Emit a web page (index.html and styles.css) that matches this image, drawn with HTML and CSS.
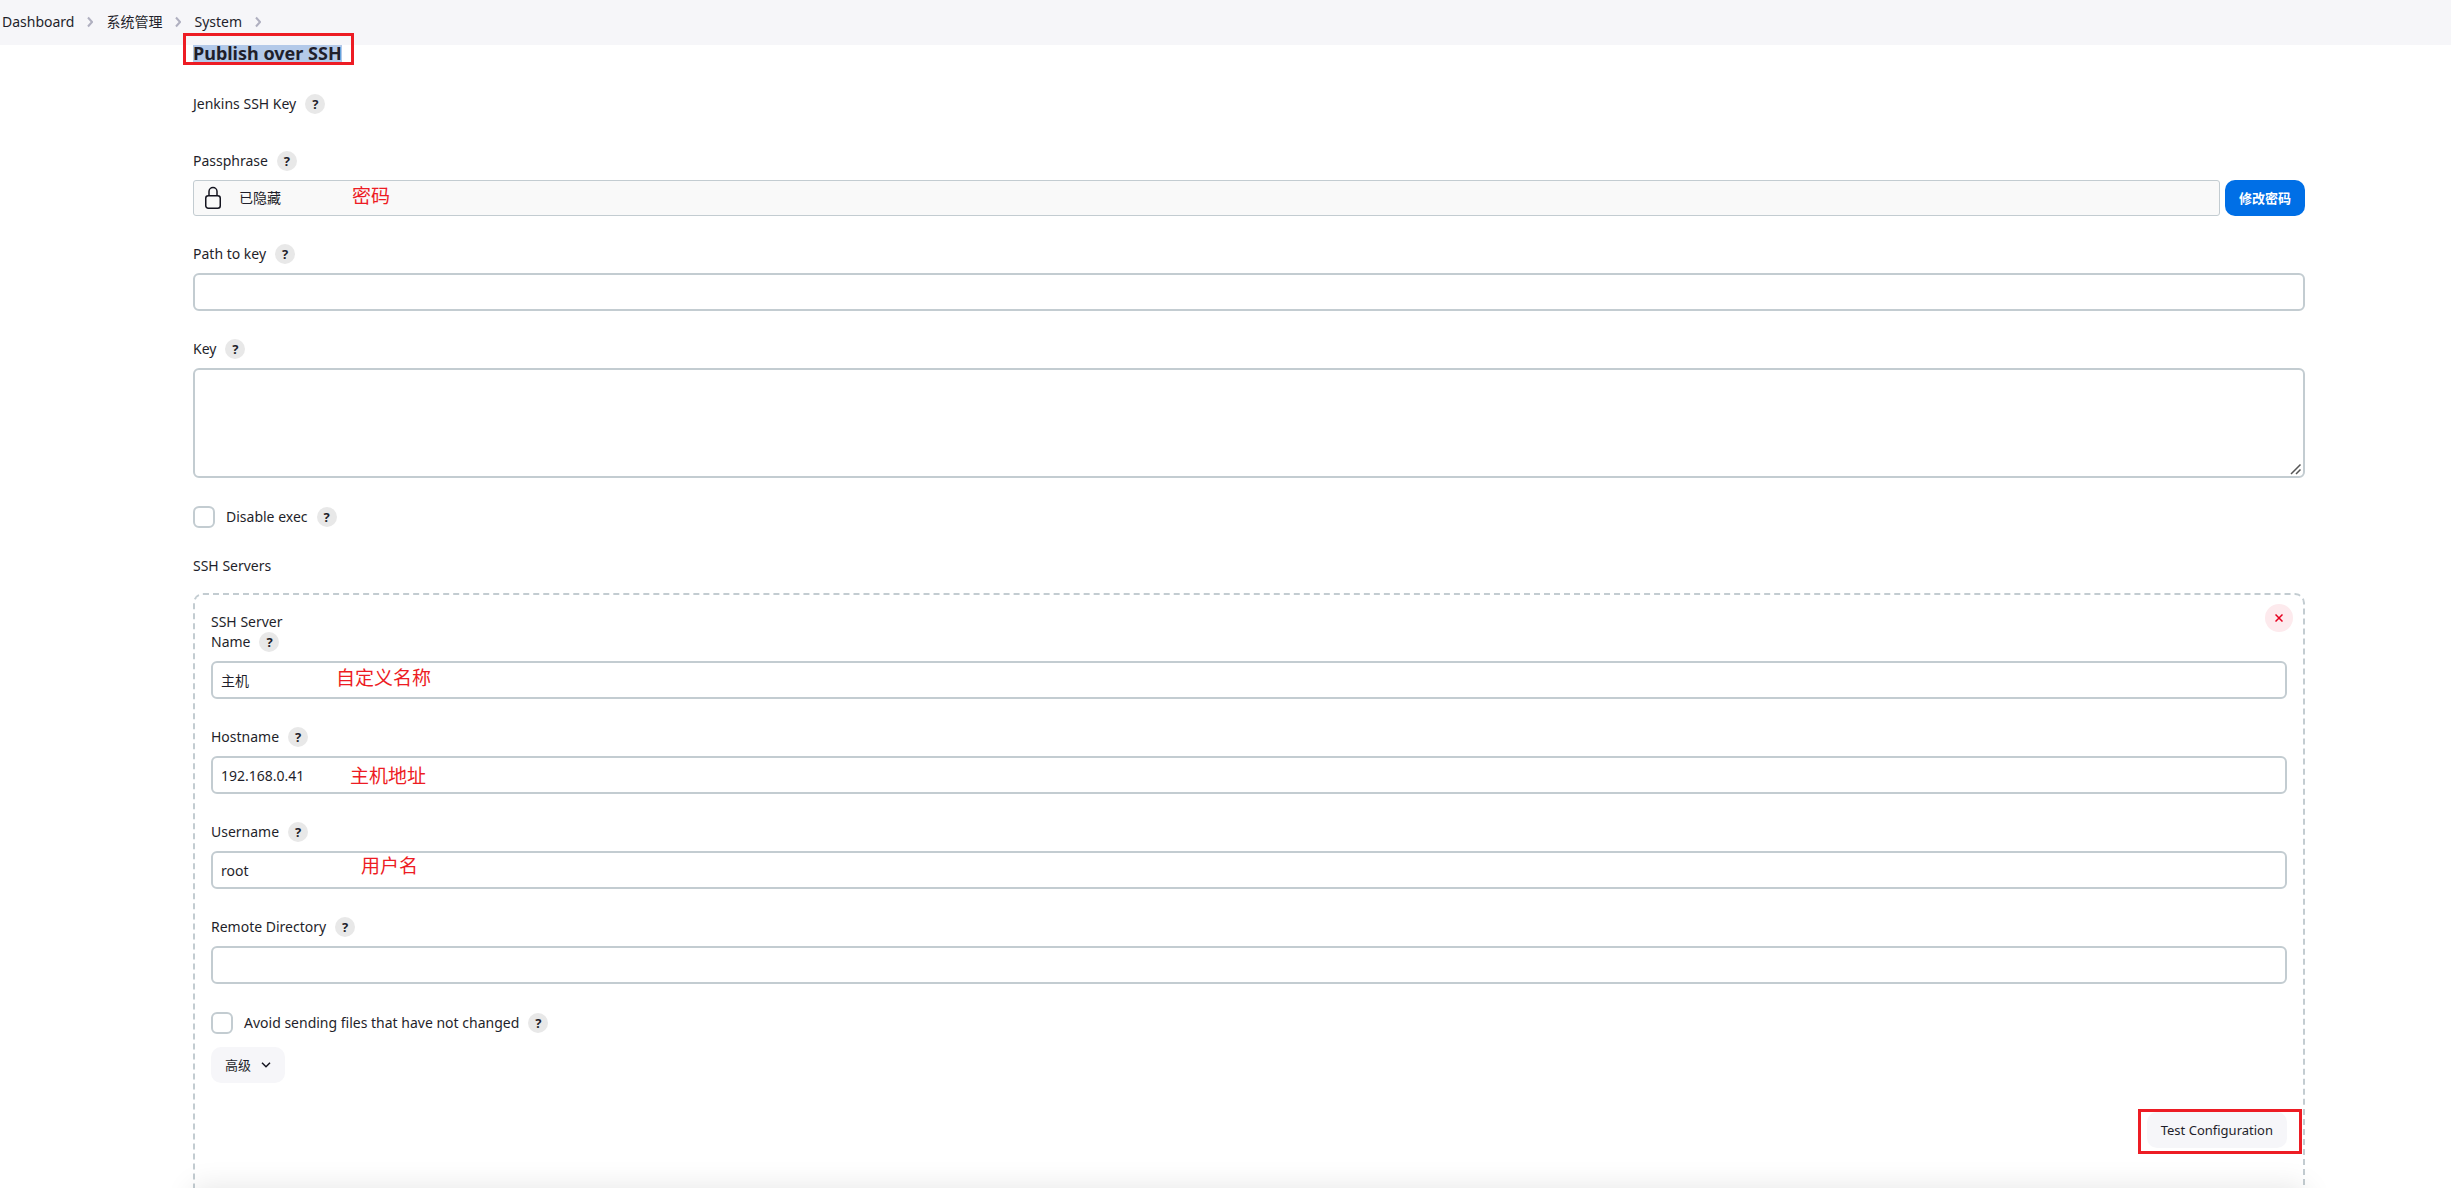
FILE: index.html
```html
<!DOCTYPE html>
<html lang="zh-CN">
<head>
<meta charset="utf-8">
<title>System - Jenkins</title>
<meta name="viewport" content="width=device-width, initial-scale=1">
<link rel="stylesheet" href="styles.css">
</head>
<body>

<nav class="breadcrumbs">
  <a href="#">Dashboard</a>
  <svg class="sep" viewBox="0 0 6 12"><path d="M1 1.5 5 6 1 10.5"/></svg>
  <a href="#">系统管理</a>
  <svg class="sep" viewBox="0 0 6 12"><path d="M1 1.5 5 6 1 10.5"/></svg>
  <a href="#">System</a>
  <svg class="sep" viewBox="0 0 6 12"><path d="M1 1.5 5 6 1 10.5"/></svg>
</nav>

<main class="page">
  <h2 class="section-title marked"><span class="selected">Publish over SSH</span></h2>

  <form class="config">
    <div class="form-item">
      <div class="form-label">Jenkins SSH Key <button type="button" class="help">?</button></div>
      <div></div>
    </div>

    <div class="form-item">
      <div class="form-label">Passphrase <button type="button" class="help">?</button></div>
      <div class="secret">
        <div class="secret-box">
          <svg class="lock" viewBox="0 0 18 24"><rect x="1.75" y="9.75" width="14.5" height="12.5" rx="2.5"/><path d="M5 9.5V5.5a4 4 0 0 1 8 0v4"/></svg>
          <span>已隐藏</span>
        </div>
        <button type="button" class="btn primary">修改密码</button>
        <span class="note note-password">密码</span>
      </div>
    </div>

    <div class="form-item">
      <div class="form-label"><label for="keyPath">Path to key</label> <button type="button" class="help">?</button></div>
      <input type="text" class="input" id="keyPath" name="keyPath">
    </div>

    <div class="form-item">
      <div class="form-label"><label for="key">Key</label> <button type="button" class="help">?</button></div>
      <textarea class="input textarea" id="key" name="key"></textarea>
    </div>

    <div class="form-check">
      <input type="checkbox" id="disableExec" name="disableExec">
      <label for="disableExec">Disable exec</label>
      <button type="button" class="help">?</button>
    </div>

    <div class="servers">
      <div class="form-label">SSH Servers</div>

      <div class="server">
        <button type="button" class="remove" aria-label="Delete">
          <svg viewBox="0 0 8 8"><path d="M.5.5l7 7M7.5.5l-7 7"/></svg>
        </button>
        <div class="server-title">SSH Server</div>

        <div class="form-item">
          <div class="form-label"><label for="name">Name</label> <button type="button" class="help">?</button></div>
          <input type="text" class="input" id="name" name="name" value="主机">
          <span class="note note-name">自定义名称</span>
        </div>

        <div class="form-item">
          <div class="form-label"><label for="hostname">Hostname</label> <button type="button" class="help">?</button></div>
          <input type="text" class="input" id="hostname" name="hostname" value="192.168.0.41">
          <span class="note note-host">主机地址</span>
        </div>

        <div class="form-item">
          <div class="form-label"><label for="username">Username</label> <button type="button" class="help">?</button></div>
          <input type="text" class="input" id="username" name="username" value="root">
          <span class="note note-user">用户名</span>
        </div>

        <div class="form-item">
          <div class="form-label"><label for="remoteDir">Remote Directory</label> <button type="button" class="help">?</button></div>
          <input type="text" class="input" id="remoteDir" name="remoteDir">
        </div>

        <div class="form-check">
          <input type="checkbox" id="avoidSame" name="avoidSame">
          <label for="avoidSame">Avoid sending files that have not changed</label>
          <button type="button" class="help">?</button>
        </div>

        <button type="button" class="btn advanced">高级
          <svg viewBox="0 0 10 6"><path d="M1 .8 5 4.8 9 .8"/></svg>
        </button>

        <div class="actions">
          <div class="marked marked-test">
            <button type="button" class="btn">Test Configuration</button>
          </div>
        </div>
      </div>
    </div>
  </form>
</main>

<footer class="bottom-bar"></footer>

</body>
</html>
```

FILE: styles.css
```css
* {
  box-sizing: border-box;
}

body {
  display: flex;
  flex-direction: column;
  height: 100vh;
  margin: 0;
  overflow: hidden;
  background: #fff;
  color: #1f1f2b;
  font-family: "Noto Sans", "Noto Sans CJK SC", sans-serif;
  font-size: 14px;
  line-height: 20px;
}

button, input, textarea {
  font: inherit;
  color: inherit;
}

/* Breadcrumbs */
.breadcrumbs {
  display: flex;
  flex: none;
  align-items: center;
  gap: 13px;
  height: 45px;
  padding: 0 2px 2px;
  background: #f6f6f9;
}

.breadcrumbs a {
  color: inherit;
  text-decoration: none;
}

.sep {
  width: 6px;
  height: 12px;
  fill: none;
  stroke: #b0b0c0;
  stroke-width: 2;
}

/* Page body, its overflow runs under the bottom bar */
.page {
  position: relative;
  flex: 1;
  min-height: 0;
  padding: 0 146px 0 193px;
}

.page::after {
  content: "";
  position: absolute;
  left: 193px;
  right: 146px;
  bottom: -40px;
  height: 40px;
  box-shadow: 0 0 30px rgba(0, 0, 0, .11);
}

.bottom-bar {
  position: relative;
  z-index: 2;
  flex: none;
  height: 12px;
  background: #fff;
}

.section-title {
  width: fit-content;
  margin: 0 0 32px;
  font-size: 18px;
  line-height: 17px;
}

.selected {
  display: block;
  background: #b3c9e9;
}

/* Red frames and notes */
.marked {
  position: relative;
}

.marked::after {
  content: "";
  position: absolute;
  inset: -12px -12px -3px -10px;
  border: 3px solid #ed1c24;
  pointer-events: none;
}

.marked-test::after {
  inset: -3px -15px -6px -9px;
}

.note {
  position: absolute;
  color: #ed1c24;
  font-family: "Noto Sans CJK SC", sans-serif;
  font-size: 19px;
  line-height: 28px;
  pointer-events: none;
}

.note-password { left: 159px; top: 1px; }
.note-name { left: 125px; top: 31px; }
.note-host { left: 139px; top: 34px; }
.note-user { left: 150px; top: 29px; }

/* Form rows */
.form-item {
  position: relative;
  display: flex;
  flex-direction: column;
  gap: 9px;
  margin-bottom: 28px;
}

.form-label {
  display: flex;
  align-items: center;
  gap: 9px;
  height: 20px;
}

.help {
  width: 20px;
  height: 20px;
  padding: 0;
  border: 0;
  border-radius: 50%;
  background: #e8e8e8;
  font-size: 13px;
  font-weight: 700;
  line-height: 20px;
}

.input {
  display: block;
  width: 100%;
  height: 38px;
  padding: 0 8px;
  border: 2px solid #c3ccd1;
  border-radius: 6px;
  background: #fff;
}

.textarea {
  height: 110px;
  resize: vertical;
}

.textarea::-webkit-resizer {
  background: url("data:image/svg+xml,%3Csvg xmlns='http://www.w3.org/2000/svg' width='15' height='15'%3E%3Cpath d='M3 13 12.500 3.500M8 13l4.500-4.500' stroke='%23555' stroke-width='1.500'/%3E%3C/svg%3E") no-repeat right bottom;
}

.form-check {
  display: flex;
  align-items: center;
  height: 22px;
}

.form-check input {
  appearance: none;
  width: 22px;
  height: 22px;
  margin: 0 11px 0 0;
  border: 2px solid #c3ccd1;
  border-radius: 6px;
}

.form-check label {
  margin-right: 9px;
}

/* Hidden passphrase */
.secret {
  position: relative;
  display: flex;
  gap: 5px;
}

.secret-box {
  display: flex;
  flex: 1;
  align-items: center;
  gap: 17px;
  height: 36px;
  padding: 0 10px;
  border: 1px solid #c3ccd1;
  border-radius: 3px;
  background: #f9f9f9;
}

.lock {
  width: 18px;
  height: 24px;
  fill: none;
  stroke: #14141f;
  stroke-width: 1.5;
}

.btn {
  height: 36px;
  padding: 0 14px;
  border: 0;
  border-radius: 10px;
  background: #f6f6f9;
  font-size: 13px;
}

.primary {
  background: #006fe6;
  color: #fff;
  font-weight: 700;
}

.advanced {
  display: flex;
  align-items: center;
  gap: 10px;
  margin-top: 13px;
}

.advanced svg {
  width: 10px;
  height: 6px;
  fill: none;
  stroke: #14141f;
  stroke-width: 1.5;
}

/* Server list */
.servers {
  margin-top: 28px;
}

.server {
  position: relative;
  margin-top: 17px;
  padding: 17px 16px 60px;
  border: 2px dashed #c3ccd1;
  border-radius: 10px;
}

.remove {
  position: absolute;
  top: 9px;
  right: 10px;
  display: flex;
  align-items: center;
  justify-content: center;
  width: 28px;
  height: 28px;
  padding: 0;
  border: 0;
  border-radius: 50%;
  background: #fdeaed;
}

.remove svg {
  width: 8px;
  height: 8px;
  stroke: #e6001f;
  stroke-width: 1.5;
}

.actions {
  display: flex;
  justify-content: flex-end;
  margin-top: 29px;
}
```
